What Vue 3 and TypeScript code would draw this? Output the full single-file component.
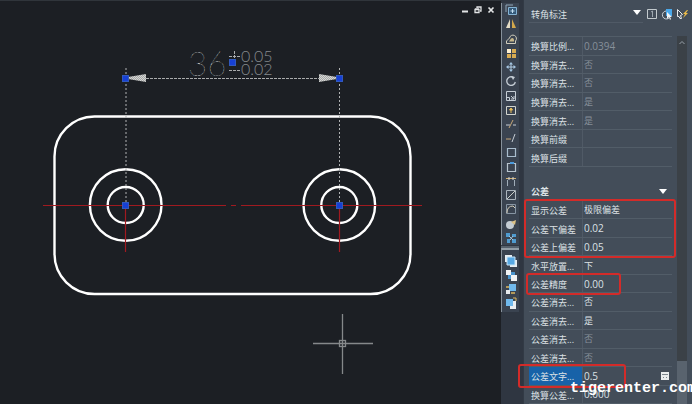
<script setup lang="ts">
import { ref } from 'vue'

interface Row {
  label: string
  value: string
  muted?: boolean
  active?: boolean
}

const scaleRows = ref<Row[]>([
  { label: '换算比例...', value: '0.0394', muted: true },
  { label: '换算消去...', value: '否', muted: true },
  { label: '换算消去...', value: '否', muted: true },
  { label: '换算消去...', value: '是', muted: true },
  { label: '换算消去...', value: '是', muted: true },
  { label: '换算前缀', value: '' },
  { label: '换算后缀', value: '' },
])

const toleranceRows = ref<Row[]>([
  { label: '显示公差', value: '极限偏差' },
  { label: '公差下偏差', value: '0.02' },
  { label: '公差上偏差', value: '0.05' },
  { label: '水平放置...', value: '下' },
  { label: '公差精度', value: '0.00' },
  { label: '公差消去...', value: '否' },
  { label: '公差消去...', value: '是' },
  { label: '公差消去...', value: '否', muted: true },
  { label: '公差消去...', value: '否', muted: true },
  { label: '公差文字...', value: '0.5', active: true },
  { label: '换算公差...', value: '0.000' },
])

const isNumeric = (v: string) => /^[\d.]+$/.test(v)

const editTools: string[] = [
  'copy', 'mirror', 'offset', 'array', 'move', 'rotate', 'scale', 'stretch', 'trim',
  'extend', 'break', 'breakPoint', 'join', 'chamfer', 'fillet', 'blend', 'explode',
]
const orderTools: string[] = ['front', 'back', 'above', 'below']

/* Markup of each 12x12 tool glyph */
const glyphs: Record<string, string> = {
  copy: '<path d="M1 8V1h7" fill="none" stroke="#8fa6b8"/><path d="M3.500 3.500h8v7h-8z" fill="#34597a" stroke="#86b4d4"/><path d="M7.500 5v4M5.500 7h4" stroke="#c4e2f4"/>',
  mirror: '<path d="M5 1v9H1z" fill="#e4dcc4"/><path d="M7 1v9h4z" fill="#d3a84c"/>',
  offset: '<path d="M1.500 10.500h9V8a3.500 3.500 0 1 0-6-3l-3 3z" fill="none" stroke="#d0cdbd"/><path d="M4 8.500h5V6.500a2 2 0 0 0-3-1z" fill="#c9b98c"/>',
  array: '<path d="M2 2h4v4H2z" fill="#fff1d2"/><path d="M7 2h4v4H7zM2 7h4v4H2zM7 7h4v4H7z" fill="#d9ac52"/>',
  move: '<path d="M6 2v8M2 6h8" stroke="#b5cfe5"/><path d="M6 1l2 2.500H4zM6 11l2-2.500H4zM1 6l2.500-2v4zM11 6L8.500 4v4z" fill="#a4c5e2"/>',
  rotate: '<path d="M8.500 2.500A4.300 4.300 0 1 0 10.300 7" fill="none" stroke="#c5cdd5" stroke-width="1.300"/><path d="M6 1l4 1-2 3z" fill="#c5cdd5"/>',
  scale: '<path d="M1.500 1.500h9v9h-9z" fill="none" stroke="#c5cdd5"/><path d="M1.500 7.500h3v3M6 6l3 3M9 6v3H6" fill="none" stroke="#c5cdd5"/>',
  stretch: '<path d="M1.500 2.500h9v8h-9z" fill="none" stroke="#d1d4ce"/><path d="M6 9V4M4.500 6L6 4l1.500 2z" fill="#e7bc58" stroke="#e7bc58"/>',
  trim: '<path d="M1 7h4M8 7h3" stroke="#c5cdd5"/><path d="M8 2L4 10" stroke="#c7a778"/>',
  extend: '<path d="M1 7h5" stroke="#c7a778"/><path d="M10 2L7 10" stroke="#c5cdd5"/>',
  break: '<path d="M2.500 2.500h8v8h-8z" fill="none" stroke="#a9bdce" stroke-width="1.200"/>',
  breakPoint: '<path d="M2.500 2.500h8v8h-8z" fill="none" stroke="#b7c3cd" stroke-width="1.200"/><path d="M5 2h4" stroke="#4c9bdc" stroke-width="2"/>',
  join: '<path d="M1 3.500h10" stroke="#d1b071"/><path d="M2.500 5v6M9.500 5v6" stroke="#9facb8"/><path d="M4 2v3M8 2v3" stroke="#d5d9dc"/>',
  chamfer: '<path d="M1.500 1.500h9v9h-9z" fill="none" stroke="#aab4bd"/><path d="M2 10l8-8" stroke="#c9cdc9"/>',
  fillet: '<path d="M1.500 1.500h9v9h-9z" fill="none" stroke="#8795a3"/><path d="M2 10q0-7 6-7l2 2" fill="none" stroke="#d2cbb8"/>',
  blend: '<circle cx="5" cy="7" r="4" fill="#c4ccd3"/><path d="M6 4l5-2-1 5z" fill="#dcc185"/>',
  explode: '<path d="M1 1h4v4H1zM7 2h4v3H7zM2 7h3v4H2zM7 7h4v4H7z" fill="#4f9bd0"/><path d="M4 4l4 4M8 4L5 8" stroke="#a5c7dc"/>',
  front: '<path d="M0 0h7v7H0zM5 5h7v7H5z" fill="#e9eef1"/><path d="M2 2h8v8H2z" fill="#58a9e4" stroke="#c7e4f7"/>',
  back: '<path d="M3 3h7v7H3z" fill="#4a94cd"/><path d="M1 1h5v5H1zM6 6h6v6H6z" fill="#f2f4f5"/>',
  above: '<path d="M4 1h7v7H4z" fill="#70b9ed"/><path d="M1 7h4v4H1z" fill="#e6eaed"/><path d="M1 4h3M6 10h4" stroke="#dab75d" stroke-width="1.500"/>',
  below: '<path d="M5 4h6v8H5z" fill="#e9edf0"/><path d="M1 2h7v7H1z" fill="#70b9ed"/><path d="M8 1h3v3" stroke="#dab75d" fill="none"/>',
}
</script>

<template>
  <div class="shell">
    <main class="canvas">
      <div class="window-controls">
        <button aria-label="minimize"><svg viewBox="0 0 8 8"><path d="M1 5.500h6" stroke-width="2" /></svg></button>
        <button aria-label="restore"><svg viewBox="0 0 8 8"><path d="M3 2V1h4v4H6M1 3.500h4v3H1zM1 3h4" stroke-width="1.300" /></svg></button>
        <button aria-label="close"><svg viewBox="0 0 8 8"><path d="M1.500 1.500l5 5M6.500 1.500l-5 5" stroke-width="1.700" /></svg></button>
      </div>
      <svg class="drawing" viewBox="0 0 501 404" preserveAspectRatio="xMinYMin meet">
        <defs>
          <pattern id="dots" width="3" height="3" patternUnits="userSpaceOnUse">
            <rect width="3" height="3" fill="#85898b" />
            <path d="M0 0h2v2H0z" fill="#e0e2e3" />
          </pattern>
          <pattern id="hatch" width="2" height="2" patternUnits="userSpaceOnUse">
            <rect width="2" height="2" fill="#a5a7a6" />
            <path d="M0 0h1v1H0zM1 1h1v1H1z" fill="#d5d6d5" />
          </pattern>
        </defs>
        <g fill="none" stroke="#fff" stroke-width="2.400">
          <rect x="54.500" y="116.500" width="356" height="177.500" rx="40" />
          <circle cx="125.700" cy="205" r="35.800" />
          <circle cx="125.700" cy="205" r="18" />
          <circle cx="339.300" cy="205" r="35.800" />
          <circle cx="339.300" cy="205" r="18" />
        </g>
        <g fill="none" stroke="#a01a20" stroke-width="1.200">
          <path d="M43 205.500H226M231 205.500h5M241 205.500H422" />
          <path d="M125.500 205v47M339.500 205v47" />
        </g>
        <g fill="none" stroke="#b0b2b3" stroke-dasharray="2 2">
          <path d="M126 68V205M339.500 68V205" />
          <path d="M146 78.500H319" stroke-dasharray="3 1" stroke="#a9abac" />
        </g>
        <path d="M128 77l18-3v8l-18-3zM337 77l-18-3v8l18-3z" fill="url(#hatch)" />
        <g class="dimension">
          <text x="188" y="76" font-size="33" fill="url(#dots)">36</text>
          <text class="limit" x="241" y="62" font-size="16">0.05</text>
          <text class="limit" x="241" y="75" font-size="16">0.02</text>
        </g>
        <path d="M229 56.500h11M234.500 51v9M229 70.500h11" stroke="#a9abac" stroke-dasharray="3 1" />
        <g fill="#1740d4" stroke="#3159bd">
          <rect x="122.500" y="75.500" width="6" height="6" />
          <rect x="336.500" y="75.500" width="6" height="6" />
          <rect x="229.500" y="59.500" width="6" height="6" />
          <rect x="122.500" y="202.500" width="6" height="6" />
          <rect x="336.500" y="202.500" width="6" height="6" />
        </g>
        <g fill="none" stroke="#85888a">
          <path d="M313 343.500h60M342.500 314v60" stroke-width="1.300" />
          <rect x="339.500" y="340.500" width="6" height="6" stroke-width="1.300" />
        </g>
      </svg>
    </main>

    <aside class="toolbar">
      <div class="tools edit">
        <button v-for="t in editTools" :key="t" :aria-label="t"><svg viewBox="0 0 12 12" v-html="glyphs[t]" /></button>
      </div>
      <div class="tools order">
        <button v-for="t in orderTools" :key="t" :aria-label="t"><svg viewBox="0 0 12 12" v-html="glyphs[t]" /></button>
      </div>
    </aside>

    <section class="palette">
      <header class="head">
        <div class="picker">
          <select aria-label="object type"><option>转角标注</option></select>
          <svg class="caret" viewBox="0 0 8 6"><path d="M0 0h8L4 5z" fill="#fff" /></svg>
        </div>
        <button aria-label="toggle pickadd"><svg viewBox="0 0 12 12"><path d="M1.500 1.500h9v9h-9z" fill="none" stroke="#c3cace" /><path d="M5 4l1.500-1v6" fill="none" stroke="#9fa8b0" /></svg></button>
        <button aria-label="select objects"><svg viewBox="0 0 12 12"><path d="M5 1h6v7H5z" fill="#4aa8ea" /><path d="M5 3a4 4 0 1 0 3 7" fill="none" stroke="#cbd3d9" /><path d="M6 4v7l2-2 1 3 1-1-1-2h2z" fill="#f0f3f5" /></svg></button>
        <button aria-label="quick select"><svg viewBox="0 0 12 12"><path d="M1.500 1.500v7h1.500l1 2h1.500l-1-3 2-1z" fill="none" stroke="#e8ebed" /><path d="M11 2L7 6h2l-2 4 5-5h-2l2-3z" fill="#edbd4a" /></svg></button>
      </header>

      <div class="body">
        <div class="lists">
          <div class="rows scale">
            <label v-for="(r, i) in scaleRows" :key="i" class="row" :class="{ muted: r.muted }">
              <span class="key">{{ r.label }}</span>
              <input v-model="r.value" :class="{ num: isNumeric(r.value) }" :disabled="r.muted">
            </label>
          </div>
          <button class="group">
            <span>公差</span>
            <svg class="caret" viewBox="0 0 8 6"><path d="M0 0h8L4 5z" fill="#fff" /></svg>
          </button>
          <div class="rows tolerance">
            <label v-for="(r, i) in toleranceRows" :key="i" class="row" :class="{ muted: r.muted, active: r.active }">
              <span class="key">{{ r.label }}</span>
              <input v-model="r.value" :class="{ num: isNumeric(r.value) }" :disabled="r.muted">
              <svg v-if="r.active" class="calc" viewBox="0 0 8 10"><path d="M0 1h8v8H0z" fill="#e9ecee" /><path d="M1 3.500h6M2 6.500h1M5 6.500h1" stroke="#7c858d" /></svg>
            </label>
            <i class="mark limits" />
            <i class="mark precision" />
            <i class="mark height" />
          </div>
        </div>
        <div class="scroll">
          <svg viewBox="0 0 8 8"><path d="M1.500 5L4 2.500 6.500 5" fill="none" stroke="#98a1a9" /></svg>
          <span class="thumb" />
        </div>
      </div>
    </section>
    <span class="watermark">tigerenter.com</span>
  </div>
</template>

<style>
body {
  margin: 0;
  background: #fff;
}
</style>

<style scoped>
.shell {
  position: relative;
  display: grid;
  grid-template-columns: 1fr 22px 169px;
  height: calc(100vh - 1px);
  overflow: hidden;
  background: #1c1f24;
  color: #dce1e5;
  font-family: "Open Sans", "Noto Sans CJK SC", sans-serif;
  font-size: 9px;
}
button {
  display: flex;
  align-items: center;
  justify-content: center;
  padding: 0;
  border: 0;
  background: none;
  color: inherit;
  font: inherit;
}
.canvas {
  position: relative;
  min-width: 0;
  border-top: 1px solid #30353b;
  box-sizing: border-box;
}
.drawing {
  display: block;
  width: 100%;
  margin-top: -1px;
}
.dimension {
  font-family: Lato, sans-serif;
  font-weight: 100;
}
.limit {
  font-weight: 300;
  fill: #85898c;
}
.window-controls {
  position: absolute;
  top: 5px;
  right: 6px;
  display: flex;
  gap: 5px;
}
.window-controls svg {
  display: block;
  width: 8px;
  height: 8px;
  fill: none;
  stroke: #e2e4e5;
}
.toolbar {
  display: flex;
  flex-direction: column;
  padding-top: 3px;
  background: #2f3641;
}
.tools {
  display: grid;
  grid-auto-rows: 1fr;
  width: 18px;
  box-sizing: border-box;
  border-left: 1px solid #87919b;
  background: #3a4350;
}
.tools svg {
  width: 12px;
  height: 12px;
}
.edit {
  height: 242px;
}
.order {
  height: 64px;
  padding: 4px 0 2px;
  border-top: 2px solid #929da6;
  box-shadow: 0 -2px #56616d;
  margin-top: 3px;
}
.palette {
  display: flex;
  flex-direction: column;
  min-width: 0;
  background: #434d59;
  border-left: 1px solid #323a45;
  box-sizing: border-box;
}
.head {
  display: flex;
  align-items: center;
  gap: 3px;
  padding: 4px 4px 0 5px;
}
.head button svg {
  width: 12px;
  height: 12px;
}
.picker {
  display: flex;
  flex: 1;
  align-items: center;
  height: 18px;
  border-bottom: 1px solid #505a66;
}
.picker select {
  flex: 1;
  min-width: 0;
  padding: 2px 2px 0;
  appearance: none;
  border: 0;
  background: none;
  color: inherit;
  font: inherit;
}
.caret {
  width: 8px;
  height: 6px;
}
.picker .caret {
  margin-right: 2px;
}
.body {
  display: flex;
  flex: 1;
  gap: 5px;
  padding: 13px 5px 0;
}
.lists {
  flex: 1;
  min-width: 0;
}
.rows {
  position: relative;
  display: grid;
  grid-auto-rows: 1fr;
  border-top: 1px solid #525d68;
}
.scale {
  height: 130px;
}
.tolerance {
  height: 203px;
}
.row {
  display: grid;
  grid-template-columns: 54px 1fr auto;
  align-items: stretch;
  min-height: 0;
  border-bottom: 1px solid #525d68;
}
.key {
  display: flex;
  align-items: center;
  padding-left: 2px;
  padding-top: 2px;
  border-right: 1px solid #505a66;
  white-space: nowrap;
}
.row input {
  width: 100%;
  min-width: 0;
  height: 100%;
  padding: 0 1px;
  box-sizing: border-box;
  border: 0;
  background: none;
  color: inherit;
  font: inherit;
}
.row input.num {
  font-size: 10px;
}
.muted input {
  color: #87909a;
}
.active .key {
  background: #1762a8;
}
.calc {
  width: 8px;
  height: 10px;
  margin-right: 3px;
  align-self: center;
}
.group {
  width: 100%;
  height: 33px;
  padding: 16px 5px 0 2px;
  box-sizing: border-box;
  justify-content: space-between;
  font-weight: 700;
}
.mark {
  position: absolute;
  box-sizing: border-box;
  border: 2px solid #d32b29;
  border-radius: 3px;
  pointer-events: none;
}
.limits {
  top: -2px;
  left: -5px;
  right: -4px;
  height: 59px;
}
.precision {
  top: 72px;
  left: -3px;
  width: 95px;
  height: 22px;
}
.height {
  top: 163px;
  left: -11px;
  width: 108px;
  height: 24px;
}
.scroll {
  display: flex;
  flex-direction: column;
  align-items: center;
  justify-content: space-between;
  width: 10px;
  background: #3b4147;
}
.scroll svg {
  width: 8px;
  height: 8px;
  margin-top: 3px;
}
.thumb {
  width: 100%;
  height: 43px;
  background: #59636e;
}
.watermark {
  position: absolute;
  right: -4px;
  bottom: 6px;
  color: #fff;
  font: 700 15px/18px "Liberation Mono", monospace;
}
</style>
